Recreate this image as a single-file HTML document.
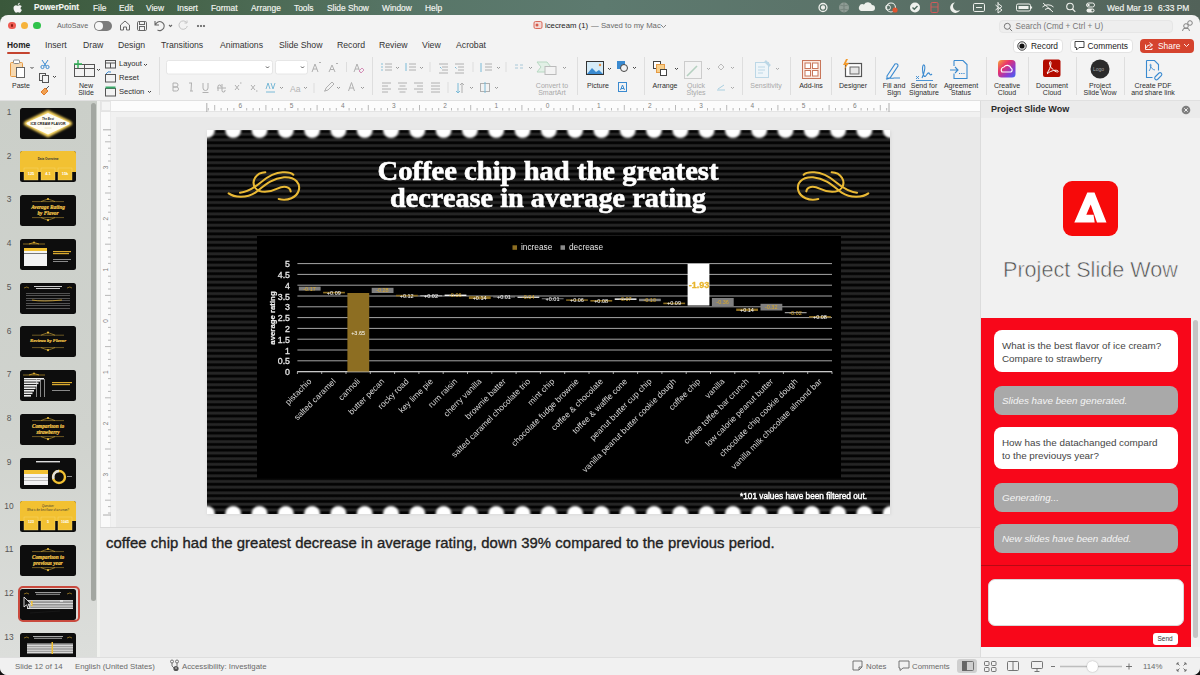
<!DOCTYPE html>
<html><head><meta charset="utf-8">
<style>
*{margin:0;padding:0;box-sizing:border-box}
html,body{width:1200px;height:675px;overflow:hidden;background:#111;font-family:"Liberation Sans",sans-serif}
.a{position:absolute}
.t{position:absolute;white-space:nowrap;line-height:1}
#menubar{left:0;top:0;width:1200px;height:16px;background:linear-gradient(90deg,#3a583b 0%,#46644a 15%,#587668 35%,#5d7a6f 50%,#5b7369 70%,#526259 100%);color:#f4f6f2;font-size:8.4px}
#menubar .t{top:3.8px;-webkit-text-stroke:0.15px #f4f6f2}
#win{left:0;top:15px;width:1200px;height:660px;background:#f3f3f3;border-radius:8px 8px 8px 8px;overflow:hidden}
.tab{position:absolute;top:40.5px;font-size:8.7px;color:#333;white-space:nowrap;line-height:1}
.lbl{position:absolute;font-size:7px;color:#2e2e2e;text-align:center;line-height:7.6px;white-space:nowrap}
.dim{color:#a9a9a9}
.sep{position:absolute;width:1px;background:#dedede;top:57px;height:38px}
.tn{position:absolute;left:2px;width:14px;text-align:center;font-size:8.4px;color:#555;line-height:1}
.st{position:absolute;top:662.5px;font-size:7.8px;color:#6a6a6a;white-space:nowrap;line-height:1}
.bub{position:absolute;left:994px;width:184px;border-radius:8px;font-size:9.86px;line-height:13.1px;padding:0 0 0 8px;color:#454545;font-family:"Liberation Sans",sans-serif}
.bw{background:#fff}
.bg{background:#a9a9a9;color:#f4f4f4;font-style:italic}
</style></head><body>
<div id="menubar" class="a">
 <svg class="a" style="left:12.5px;top:2px" width="10" height="12" viewBox="0 0 10 12"><path d="M7.6,6.4c0-1.4,1.1-2,1.2-2.1C8.1,3.3,7.1,3.2,6.7,3.2c-0.9-0.1-1.6,0.5-2,0.5s-1.1-0.5-1.8-0.5C1.9,3.2,0.5,4.100,0.5,6c0,1.200,0.400,2.400,1,3.300,0.500,0.700,1,1.500,1.700,1.400,0.700,0,0.900-0.400,1.700-0.400s1,0.400,1.700,0.400c0.700,0,1.200-0.700,1.600-1.400,0.500-0.700,0.700-1.500,0.700-1.500S7.600,7.500,7.600,6.400z M6.300,2.300C6.700,1.900,6.900,1.300,6.800,0.700,6.300,0.700,5.700,1,5.300,1.400,5,1.800,4.700,2.400,4.800,3,5.400,3,5.900,2.700,6.300,2.300z" fill="#f4f4f4"/></svg>
 <span class="t" style="left:34px;font-weight:bold;font-size:8.2px">PowerPoint</span>
 <span class="t" style="left:93px">File</span><span class="t" style="left:119px">Edit</span><span class="t" style="left:146px">View</span><span class="t" style="left:177px">Insert</span><span class="t" style="left:211px">Format</span><span class="t" style="left:251px">Arrange</span><span class="t" style="left:294px">Tools</span><span class="t" style="left:327px">Slide Show</span><span class="t" style="left:382px">Window</span><span class="t" style="left:425px">Help</span>
 <svg class="a" style="left:800px;top:0" width="300" height="16" viewBox="800 0 300 16" fill="none" stroke="#eef0ec" stroke-width="1.3">
  <circle cx="823" cy="7.5" r="4"/><circle cx="823" cy="7.5" r="1.5" fill="#eef0ec"/>
  <circle cx="844" cy="7.5" r="5" fill="#8f9c95" stroke="none"/><path d="M840,5 q4,2 8,0 M840,10 q4,-2 8,0 M844,2.5 v10" stroke="#6f7c75" stroke-width="0.7"/>
  <path d="M861,11 h11 a3,3 0 0,0 0,-6 a4.5,4.5 0 0,0 -8,-0.5 a3.3,3.3 0 0,0 -3,6.5z" fill="#eef0ec" stroke="none"/>
  <circle cx="891" cy="7.5" r="4.5" stroke-width="1.1"/><circle cx="888" cy="7.5" r="2.5" stroke-width="0.9"/><circle cx="895" cy="10" r="2.6" fill="#e0542f" stroke="none"/>
  <circle cx="915" cy="7.5" r="5" fill="#eef0ec" stroke="none"/><path d="M912.5,7.5 l1.8,1.8 3.2,-3.4" stroke="#4f6a5e" stroke-width="1.4"/>
  <rect x="931" y="2.5" width="7" height="10" rx="1.2" stroke="#d85a5a" stroke-width="1"/><path d="M931,7 h7" stroke="#d85a5a" stroke-width="0.8"/>
  <path d="M955,2.5 a5.2,5.2 0 1,0 5,7.5 a4.2,4.2 0 0,1 -5,-7.5z" fill="#eef0ec" stroke="none"/>
  <rect x="973.5" y="3.5" width="11" height="8" rx="1.2" stroke-width="1"/><path d="M976,7.5 h6" stroke-width="1"/>
  <path d="M998,3.5 l4,3 -4,3 M998,2 v11 l4,-3 -4,-3 M995.5,5 l2.5,2 M995.5,10 l2.5,-2" stroke-width="1"/>
  <rect x="1016.5" y="4" width="14" height="7" rx="1.5" stroke-width="1"/><rect x="1018.5" y="6" width="10" height="3" fill="#eef0ec" stroke="none"/><path d="M1031.5,6.5 v2" stroke-width="1.2"/>
  <path d="M1043,3 l10,9 M1042.5,7 a8,8 0 0,1 11,0 M1045,9.5 a4.5,4.5 0 0,1 6,0" stroke-width="1"/>
  <circle cx="1070" cy="6.5" r="3.3" stroke-width="1.1"/><path d="M1072.5,9 l2.8,2.8" stroke-width="1.2"/>
  <rect x="1086.5" y="3" width="8" height="4" rx="2" stroke-width="1"/><rect x="1086.5" y="8.5" width="8" height="4" rx="2" fill="#eef0ec" stroke="none"/><circle cx="1088.5" cy="5" r="1.2" fill="#eef0ec" stroke="none"/><circle cx="1092.5" cy="10.5" r="1.1" fill="#526259" stroke="none"/>
 </svg>
 <span class="t" style="left:1107px">Wed Mar 19</span><span class="t" style="left:1158px">6:33 PM</span>
</div>
<div class="a" style="left:0;top:14px;width:1200px;height:12px;background:linear-gradient(90deg,#3a583b 0%,#46644a 15%,#587668 35%,#5d7a6f 50%,#5b7369 70%,#526259 100%)"></div><div id="win" class="a"></div>
<!-- title bar -->
<div class="a" style="left:8px;top:21.5px;width:7.5px;height:7.5px;border-radius:50%;background:#ee5b52"></div>
<div class="a" style="left:10.5px;top:24px;width:2.5px;height:2.5px;border-radius:50%;background:#8c1a12"></div>
<div class="a" style="left:20.5px;top:21.5px;width:7.5px;height:7.5px;border-radius:50%;background:#f6b33b"></div>
<div class="a" style="left:33px;top:21.5px;width:7.5px;height:7.5px;border-radius:50%;background:#2fc24a"></div>
<span class="t" style="left:57px;top:22px;font-size:7.2px;color:#666">AutoSave</span>
<div class="a" style="left:94px;top:21px;width:18px;height:10px;border-radius:5px;background:#7b7b7b"><div class="a" style="left:1px;top:1px;width:8px;height:8px;border-radius:50%;background:#f7f7f7"></div></div>
<svg class="a" style="left:116px;top:17px" width="100" height="16" viewBox="0 0 100 16" fill="none" stroke="#666" stroke-width="1">
 <path d="M4.5,8 L9,4 L13.5,8 V13 H10.5 V10 H7.5 V13 H4.5Z"/>
 <rect x="21.5" y="4.5" width="9" height="9" rx="1.2"/><rect x="23.5" y="4.5" width="5" height="3"/><rect x="23.5" y="9.5" width="5" height="4"/>
 <path d="M39,4 v4 h4 M39.5,7.5 a4.5,4.5 0 1,1 2,5.5" stroke-width="1.1"/>
 <path d="M53,8 l1.5,1.5 1.5,-1.5" stroke-width="1.1"/>
 <path d="M70.5,5.5 a4.2,4.2 0 1,0 0.8,3.5 M71,3.5 v2.5 h-2.5" stroke="#c4c4c4"/>
 <circle cx="82" cy="9" r="0.7" fill="#666"/><circle cx="85" cy="9" r="0.7" fill="#666"/><circle cx="88" cy="9" r="0.7" fill="#666"/>
</svg>
<svg class="a" style="left:533px;top:20px" width="10" height="10" viewBox="0 0 10 10"><rect x="1" y="1.5" width="8" height="7" rx="1.5" fill="#f2d9d5" stroke="#d65a4a" stroke-width="0.9"/><circle cx="4" cy="5" r="1.5" fill="#d65a4a"/></svg>
<span class="t" style="left:545px;top:21.5px;font-size:7.75px;color:#222">icecream (1)</span>
<span class="t" style="left:591px;top:21.5px;font-size:7.75px;color:#6a6a6a">— Saved to my Mac</span><svg class="a" style="left:660px;top:24px" width="7" height="5" viewBox="0 0 7 5" fill="none" stroke="#777" stroke-width="0.9"><path d="M1,1 l2.5,2.5 2.5,-2.5"/></svg>
<div class="a" style="left:999px;top:19.5px;width:174px;height:13px;border-radius:4px;background:#eeeeee;border:1px solid #e6e6e6"></div>
<svg class="a" style="left:1003px;top:21.5px" width="10" height="10" viewBox="0 0 10 10" fill="none" stroke="#777" stroke-width="1"><circle cx="4.3" cy="4.3" r="3"/><path d="M6.5,6.5 l2.6,2.6"/></svg>
<span class="t" style="left:1015.5px;top:22.8px;font-size:8.15px;color:#777">Search (Cmd + Ctrl + U)</span>
<svg class="a" style="left:1181px;top:18px" width="14" height="14" viewBox="0 0 14 14" fill="none" stroke="#777" stroke-width="0.9"><circle cx="5" cy="8" r="2.3"/><circle cx="9" cy="5" r="2.3"/><path d="M1.5,13 a3.5,3 0 0,1 7,0"/></svg>
<!-- tabs -->
<span class="tab" style="left:7px;color:#222;font-weight:bold;font-size:8.4px">Home</span>
<div class="a" style="left:7px;top:51.5px;width:23px;height:2px;background:#c4432f;border-radius:1px"></div>
<span class="tab" style="left:45px">Insert</span><span class="tab" style="left:83px">Draw</span><span class="tab" style="left:118px">Design</span><span class="tab" style="left:161px">Transitions</span><span class="tab" style="left:220px">Animations</span><span class="tab" style="left:279px">Slide Show</span><span class="tab" style="left:337px">Record</span><span class="tab" style="left:379px">Review</span><span class="tab" style="left:422px">View</span><span class="tab" style="left:456px">Acrobat</span>
<div class="a" style="left:1012.5px;top:38.5px;width:50px;height:14px;border-radius:4px;background:#fff;border:1px solid #e3e3e3"></div>
<svg class="a" style="left:1017px;top:40.5px" width="10" height="10" viewBox="0 0 10 10"><circle cx="5" cy="5" r="4.2" fill="none" stroke="#222" stroke-width="0.9"/><circle cx="5" cy="5" r="2.6" fill="#111"/></svg>
<span class="t" style="left:1031px;top:41.5px;font-size:8.4px;color:#222">Record</span>
<div class="a" style="left:1069.5px;top:38.5px;width:63px;height:14px;border-radius:4px;background:#fff;border:1px solid #e3e3e3"></div>
<svg class="a" style="left:1074px;top:40px" width="11" height="11" viewBox="0 0 11 11" fill="none" stroke="#333" stroke-width="0.9"><path d="M1,1.5 h9 v6 h-5 l-2.5,2.5 v-2.5 h-1.5z"/></svg>
<span class="t" style="left:1087.5px;top:41.5px;font-size:8.4px;color:#222">Comments</span>
<div class="a" style="left:1139.5px;top:38.5px;width:54px;height:14px;border-radius:4px;background:#d5432e"></div>
<svg class="a" style="left:1144px;top:40.5px" width="10" height="10" viewBox="0 0 10 10" fill="none" stroke="#fff" stroke-width="0.9"><path d="M5.5,1.5 l3,2.5 -3,2.5 M8.5,4 h-3 a3,3 0 0,0 -3,3 M1.5,3.5 v5 h6.5 v-1.5"/></svg>
<span class="t" style="left:1158px;top:41.5px;font-size:8.4px;color:#fff">Share</span>
<svg class="a" style="left:1183px;top:43px" width="7" height="5" viewBox="0 0 7 5" fill="none" stroke="#fff" stroke-width="0.9"><path d="M1,1 l2.5,2.5 2.5,-2.5"/></svg>
<!-- ribbon -->
<svg class="a" style="left:0;top:55px" width="1200" height="45" viewBox="0 55 1200 45" fill="none" stroke-width="1">
 <!-- Paste -->
 <rect x="10.5" y="62.5" width="12" height="14" rx="1" fill="#f7d9b0" stroke="#e59a45"/>
 <rect x="13.5" y="60" width="6" height="3.5" rx="1" fill="#fff" stroke="#888"/>
 <rect x="16.5" y="67.5" width="8" height="10" fill="#fff" stroke="#666"/>
 <path d="M30.5,67 l1.5,1.5 1.5,-1.5" stroke="#444"/>
 <!-- cut copy painter -->
 <path d="M42,60 l4,6 M48,60 l-4,6" stroke="#3a8ad0"/><circle cx="42.5" cy="67" r="1.6" stroke="#3a8ad0"/><circle cx="47.5" cy="67" r="1.6" stroke="#3a8ad0"/>
 <rect x="39.5" y="73.5" width="6" height="7" stroke="#555"/><rect x="42.5" y="75.5" width="6" height="7" fill="#f3f3f3" stroke="#555"/>
 <path d="M53,76 l1.5,1.5 1.5,-1.5" stroke="#444"/>
 <path d="M41,92 l4,-4 3,3 -4,4z" fill="#f0a050" stroke="#e07a2a"/><path d="M46,89 l3,-3" stroke="#555"/>
 <!-- new slide -->
 <rect x="74.5" y="64.5" width="20" height="12" stroke="#555"/><path d="M84.5,64.5 v12 M74.5,68.5 h20" stroke="#555"/>
 <path d="M78,60 v8 M74,64 h8" stroke="#2fae55" stroke-width="1.4"/>
 <path d="M97,69 l1.5,1.5 1.5,-1.5" stroke="#444"/>
 <!-- layout reset section -->
 <rect x="105.5" y="60.5" width="10" height="7.5" stroke="#555"/><path d="M105.5,63 h10 M110.5,63 v5" stroke="#555"/>
 <path d="M144,64 l1.5,1.5 1.5,-1.5" stroke="#444"/>
 <rect x="105.5" y="74.5" width="10" height="7.5" stroke="#555"/><path d="M106,74 a4,4 0 0,1 5,-2" stroke="#3a8ad0"/>
 <rect x="105.5" y="88.5" width="10" height="7.5" stroke="#555"/><rect x="105.5" y="86.5" width="10" height="2" fill="#3aaa6a" stroke="none"/>
 <path d="M148,91 l1.5,1.5 1.5,-1.5" stroke="#444"/>
 <!-- font boxes -->
 <rect x="166.5" y="60.5" width="106" height="13.5" rx="2" fill="#fff" stroke="#e6e6e6"/>
 <path d="M266,66.5 l1.5,1.5 1.5,-1.5" stroke="#555"/>
 <rect x="275.5" y="60.5" width="32" height="13.5" rx="2" fill="#fff" stroke="#e6e6e6"/>
 <path d="M301,66.5 l1.5,1.5 1.5,-1.5" stroke="#555"/>
 <g stroke="#b0b0b0">
 <path d="M312,72 l3,-8 3,8 M313,69 h4 M319,63 l1,-1 1,1"/>
 <path d="M329,72 l3,-7 3,7 M330,69.5 h4 M336,63 l1,1 1,-1"/>
 <path d="M346.5,62 v10" stroke="#ddd"/>
 <path d="M354,72 l3,-8 3,8 M355,69 h4"/><path d="M359,71 l3,-3 2,2 -3,3z" stroke="#d58fb8"/>
 <!-- row 2 -->
 <path d="M173,83 h3 a2,2 0 0,1 0,4 h-3z M173,87 h3.5 a2,2 0 0,1 0,4 h-3.5z"/>
 <path d="M189,83 h3 M190,91 h3 M191.5,83 l-0.5,8"/>
 <path d="M203,83 v5 a2.5,2.5 0 0,0 5,0 v-5 M202.5,92.5 h6"/>
 <path d="M217,88 h9 M218,91 v-5 a1.5,1.5 0 0,1 3,1 M222,84 v7 a1.5,1.5 0 0,0 3,-1"/>
 <path d="M235,85 l4,5 M239,85 l-4,5 M240,83 h1.5"/>
 <path d="M251,85 l4,5 M255,85 l-4,5 M256,91 h1.5"/>
 <path d="M266,89 l2,-6 2,6 M271,83 l2,6 2,-6 M266,92 h9" stroke="#7bbad7"/>
 <path d="M280,87 l1.5,1.5 1.5,-1.5" stroke="#999"/>
 
 <path d="M304,87 l1.5,1.5 1.5,-1.5" stroke="#999"/>
 <path d="M314,83 v10" stroke="#ddd"/>
 <path d="M325,91 l1,-3 6,-6 2,2 -6,6z M325,91 h-1"/>
 <path d="M337,87 l1.5,1.5 1.5,-1.5" stroke="#999"/>
 <path d="M348.5,91 l3,-8.5 3,8.5 M349.8,88 h3.4"/>
 <path d="M361,87 l1.5,1.5 1.5,-1.5" stroke="#999"/>
 <!-- paragraph -->
 <circle cx="382" cy="64" r="0.8" fill="#7bbad7" stroke="none"/><circle cx="382" cy="67" r="0.8" fill="#7bbad7" stroke="none"/><circle cx="382" cy="70" r="0.8" fill="#7bbad7" stroke="none"/>
 <path d="M385,64 h7 M385,67 h7 M385,70 h7"/><path d="M396,67 l1.5,1.5 1.5,-1.5" stroke="#999"/>
 <path d="M406,63 v8" stroke="#7bbad7"/><path d="M409,64 h7 M409,67 h7 M409,70 h7"/><path d="M420,67 l1.5,1.5 1.5,-1.5" stroke="#999"/>
 <path d="M430,62 v10" stroke="#ddd"/>
 <path d="M439,64 h9 M442,67 h6 M442,70 h6 M439,73 h9"/><path d="M440,67 l1.5,1.5" stroke="#7bbad7"/>
 <path d="M455,64 h9 M458,67 h6 M458,70 h6 M455,73 h9"/><path d="M455,67 l1.5,1.5" stroke="#7bbad7"/>
 <path d="M473,62 v10" stroke="#ddd"/>
 <path d="M481,63 v9" stroke="#7bbad7"/><path d="M485,64 h7 M485,67 h7 M485,70 h7"/><path d="M497,67 l1.5,1.5 1.5,-1.5" stroke="#999"/>
 <path d="M506,62 v10" stroke="#ddd"/>
 <path d="M515,65 h3 M515,68 h3 M520,65 h3 M520,68 h3" stroke="#a9c8d8"/><path d="M529,67 l1.5,1.5 1.5,-1.5" stroke="#999"/>
 <path d="M537,62 h10 l4,5 -4,5 h-10 l4,-5z" fill="#e2f0e6" stroke="#b7d8c2"/><rect x="545" y="66.5" width="11" height="8" fill="#f3f3f3" stroke="#bbb"/>
 <path d="M563,67 l1.5,1.5 1.5,-1.5" stroke="#999"/>
 <path d="M382,83 h9 M382,86 h6 M382,89 h9 M382,92 h6"/>
 <path d="M398,83 h9 M399.5,86 h6 M398,89 h9 M399.5,92 h6"/>
 <path d="M414,83 h9 M417,86 h6 M414,89 h9 M417,92 h6"/>
 <path d="M431,83 h9 M431,86 h9 M431,89 h9 M431,92 h9"/>
 <path d="M448,82 v11" stroke="#ddd"/>
 <path d="M458,83 v10 M456,91 l2,2 2,-2" stroke="#7bbad7"/><path d="M462,93 v-10 M460,85 l2,-2 2,2"/>
 <path d="M470,87 l1.5,1.5 1.5,-1.5" stroke="#999"/>
 <rect x="480.5" y="83.5" width="9" height="8"/><path d="M485,82 v11" stroke="#7bbad7"/>
 <path d="M495,87 l1.5,1.5 1.5,-1.5" stroke="#999"/>
 </g>
 <!-- picture / shapes -->
 <rect x="586.5" y="61.5" width="17" height="13" fill="#d5ebf7" stroke="#333"/><path d="M587,74 l5,-6 4,4 3,-2 4,4z" fill="#3a8ad0" stroke="none"/><circle cx="600" cy="65" r="1.2" fill="#e88a3a" stroke="none"/>
 <path d="M608,68 l1.5,1.5 1.5,-1.5" stroke="#444"/>
 <rect x="617.5" y="61.5" width="7" height="7" fill="#3a8ad0" stroke="#3a8ad0"/><circle cx="624" cy="68" r="3.5" fill="#f3f3f3" stroke="#444"/>
 <path d="M633,67 l1.5,1.5 1.5,-1.5" stroke="#444"/>
 <rect x="618.5" y="82.5" width="8" height="9" stroke="#3a8ad0"/><path d="M620.5,90 l2,-5 2,5 M621,88.5 h3" stroke="#3a8ad0"/>
 <!-- arrange -->
 <rect x="653.5" y="61.5" width="7" height="7" fill="#fff" stroke="#444"/><rect x="656.5" y="64.5" width="8" height="8" fill="#f7cf8a" stroke="#e59a45"/><rect x="660.5" y="69.5" width="6" height="6" fill="#fff" stroke="#444"/>
 <path d="M675,68 l1.5,1.5 1.5,-1.5" stroke="#444"/>
 <rect x="684.5" y="61.5" width="17" height="17" stroke="#ccc"/><path d="M687,76 l10,-10" stroke="#b5d0c0" stroke-width="1.6"/>
 <path d="M707,68 l1.5,1.5 1.5,-1.5" stroke="#aaa"/>
 <path d="M718,67 l3,-3 3,3 -3,3z" stroke="#bbb"/><path d="M731,67 l1.5,1.5 1.5,-1.5" stroke="#aaa"/>
 <path d="M718,89 l6,-4 M717,90 h8" stroke="#a9cfe0"/><path d="M731,87 l1.5,1.5 1.5,-1.5" stroke="#aaa"/>
 <!-- sensitivity -->
 <rect x="755.5" y="62.5" width="13" height="15" fill="#eef5f9" stroke="#bcd7e6"/><path d="M758,67 h7 M758,70 h7 M758,73 h5" stroke="#bcd7e6"/><path d="M765,61 l5,5" stroke="#bcd7e6" stroke-width="2.5"/>
 <path d="M776,68 l1.5,1.5 1.5,-1.5" stroke="#aaa"/>
 <!-- add-ins -->
 <rect x="802.5" y="60.5" width="18" height="18" fill="#fbe9e1" stroke="#c8765a"/><rect x="805" y="63" width="5.5" height="5.5" fill="#fff" stroke="#c8765a"/><rect x="812.5" y="63" width="5.5" height="5.5" fill="#fff" stroke="#c8765a"/><rect x="805" y="70.5" width="5.5" height="5.5" fill="#fff" stroke="#c8765a"/><rect x="812.5" y="70.5" width="5.5" height="5.5" fill="#fff" stroke="#c8765a"/>
 <!-- designer -->
 <rect x="845.5" y="63.5" width="16" height="13" fill="#fff" stroke="#555" stroke-width="1.2"/><rect x="850" y="67" width="9" height="7" fill="#e6e6e6" stroke="#666"/>
 <path d="M846,59 l-3,6 h3 l-2,5 5,-7 h-3 l2,-4z" fill="#f39a2c" stroke="none"/>
 <!-- fill and sign etc -->
 <path d="M887,76 l8,-12 a2,2 0 0,1 3,2 l-8,12 -3,1z M886,79 c3,-2 5,0 8,-1 h6" stroke="#3a8ad0" stroke-width="1.1"/>
 <path d="M916,76 l3,3 M919,76 l-3,3 M916,80.5 h17" stroke="#3a8ad0" stroke-width="0.9"/><path d="M922,78 c2,-4 4,-12 2,-13 c-2,-1 -2,8 0,11 c2,2 3,-4 5,-3 c1,1 1,3 3,1" stroke="#3a8ad0" stroke-width="1.1"/>
 <path d="M954,60.5 h9 l4,4 v14 h-13 v-5 M954,66 v-5.5" stroke="#3a8ad0" stroke-width="1.1"/><path d="M950,70 h8 M955,67 l3,3 -3,3" stroke="#3a8ad0" stroke-width="1.1"/><path d="M959,73.5 h6" stroke="#3a8ad0" stroke-dasharray="1.2 1"/>
 <!-- creative cloud -->
 <defs><linearGradient id="ccg" x1="0" y1="0" x2="1" y2="1"><stop offset="0" stop-color="#f7a93a"/><stop offset="0.35" stop-color="#e9336b"/><stop offset="0.7" stop-color="#8a3bd1"/><stop offset="1" stop-color="#3d6af2"/></linearGradient></defs>
 <rect x="998" y="60" width="17.5" height="17.5" rx="3.5" fill="url(#ccg)"/><path d="M1002,72 a3,3 0 0,1 2,-5 a4,4 0 0,1 7,1 a2.3,2.3 0 0,1 0,4z" stroke="#fff" stroke-width="1.2"/>
 <!-- document cloud -->
 <rect x="1043" y="59.5" width="17.5" height="17.5" rx="2" fill="#b30b00"/><path d="M1047,73 c2,-2 4,-7 4,-10 c0,-2 -1.5,-2 -1.5,0 c0,4 5,9 8,9 c1,0 1,-1 0,-1.5 c-3,-1 -8,1 -10.5,3.5" stroke="#fff" stroke-width="1"/>
 <!-- logo -->
 <circle cx="1100" cy="69" r="9.5" fill="#2b2b2b"/>
 <!-- create pdf -->
 <path d="M1146.5,60.5 h8 l4,4 v6 M1146.5,60.5 v17 h6" stroke="#3a8ad0" stroke-width="1.1"/><path d="M1149,71 c1,-1 2,-4 2,-6 c0,-1 -1,-1 -1,0 c0,2 3,5 5,5" stroke="#3a8ad0" stroke-width="0.9"/><path d="M1155,77 l4,-4 a1.8,1.8 0 0,1 2.5,2.5 l-4,4 a1.8,1.8 0 0,1 -2.5,-2.5z" stroke="#3a8ad0" stroke-width="1.1"/>
</svg>
<span class="t" style="left:1093px;top:66.5px;font-size:5px;color:#aaa">Logo</span>
<span class="t" style="left:290px;top:84.5px;font-size:8.6px;color:#b4b4b4">Aa</span>
<div class="sep" style="left:65px"></div><div class="sep" style="left:159px"></div><div class="sep" style="left:372px"></div><div class="sep" style="left:577px"></div><div class="sep" style="left:644px"></div><div class="sep" style="left:742px"></div><div class="sep" style="left:790px"></div><div class="sep" style="left:831px"></div><div class="sep" style="left:875px"></div><div class="sep" style="left:986px"></div><div class="sep" style="left:1028px"></div><div class="sep" style="left:1076px"></div><div class="sep" style="left:1124px"></div>
<div class="lbl" style="left:0px;width:42px;top:81.8px">Paste</div>
<div class="lbl" style="left:70px;width:32px;top:81.8px">New<br>Slide</div>
<span class="t" style="left:119px;top:60px;font-size:7.6px;color:#2e2e2e">Layout</span>
<span class="t" style="left:119px;top:73.5px;font-size:7.6px;color:#2e2e2e">Reset</span>
<span class="t" style="left:119px;top:87.8px;font-size:7.6px;color:#2e2e2e">Section</span>
<div class="lbl dim" style="left:527px;width:50px;top:81.8px">Convert to<br>SmartArt</div>
<div class="lbl" style="left:580px;width:36px;top:81.8px">Picture</div>
<div class="lbl" style="left:647px;width:36px;top:81.8px">Arrange</div>
<div class="lbl dim" style="left:678px;width:36px;top:81.8px">Quick<br>Styles</div>
<div class="lbl dim" style="left:745px;width:42px;top:81.8px">Sensitivity</div>
<div class="lbl" style="left:793px;width:36px;top:81.8px">Add-ins</div>
<div class="lbl" style="left:835px;width:36px;top:81.8px">Designer</div>
<div class="lbl" style="left:876px;width:36px;top:81.8px">Fill and<br>Sign</div>
<div class="lbl" style="left:904px;width:40px;top:81.8px">Send for<br>Signature</div>
<div class="lbl" style="left:940px;width:42px;top:81.8px">Agreement<br>Status</div>
<div class="lbl" style="left:987px;width:40px;top:81.8px">Creative<br>Cloud</div>
<div class="lbl" style="left:1030px;width:44px;top:81.8px">Document<br>Cloud</div>
<div class="lbl" style="left:1078px;width:44px;top:81.8px">Project<br>Slide Wow</div>
<div class="lbl" style="left:1124px;width:58px;top:81.8px">Create PDF<br>and share link</div>
<!-- ribbon bottom border -->
<div class="a" style="left:0;top:100px;width:1200px;height:1px;background:#e0e0e0"></div>
<!-- thumbnails panel -->
<div class="a" style="left:0;top:101px;width:98px;height:556px;background:linear-gradient(180deg,#cbcfc9 0%,#d0d3ce 60%,#dcdedb 100%)"></div>
<div class="a" style="left:91px;top:103px;width:5px;height:498px;border-radius:3px;background:#a3a7a1"></div>
<div class="a" style="left:97px;top:101px;width:3px;height:556px;background:#f1f2ef"></div><div class="a" style="left:100px;top:101px;width:1px;height:556px;background:#e3e3e3"></div>
<div class="tn" style="top:107.7px">1</div>
<svg class="a" style="left:20px;top:107.5px" width="56" height="31" viewBox="0 0 56 31" font-family="Liberation Sans, sans-serif"><defs><filter id="tg1" x="-30%" y="-30%" width="160%" height="160%"><feGaussianBlur stdDeviation="0.9"/></filter></defs><rect width="56" height="31" rx="2.5" fill="#0d0d0d"/><path d="M28,3.2 L50,14 Q52.5,15.5 50,17 L28,28.3 L6,17 Q3.5,15.5 6,14Z" fill="#f9de7a" stroke="#f5d055" stroke-width="2" filter="url(#tg1)"/><path d="M28,5 L48.5,14.3 Q50.5,15.5 48.5,16.7 L28,26.5 L7.5,16.7 Q5.5,15.5 7.5,14.3Z" fill="#fffdf4"/><text x="28" y="12.3" font-size="2.8" text-anchor="middle" font-style="italic" font-weight="bold" fill="#222">The Best</text><text x="28" y="16.7" font-size="3.55" font-weight="bold" text-anchor="middle" fill="#111">ICE CREAM FLAVOR</text><rect x="24.5" y="19.5" width="7" height="1.2" fill="#efe8c8"/></svg>
<div class="tn" style="top:151.5px">2</div>
<svg class="a" style="left:20px;top:151.3px" width="56" height="31" viewBox="0 0 56 31" font-family="Liberation Sans, sans-serif"><rect width="56" height="31" rx="2.5" fill="#0d0d0d"/><rect width="56" height="21" rx="2.5" fill="#f2c132"/><rect y="10" width="56" height="11" fill="#f2c132"/><text x="28" y="9" font-size="3" text-anchor="middle" fill="#333" font-weight="bold">Data Overview</text><rect x="4" y="17" width="14" height="12" fill="#f2c132" stroke="#f7dc7a" stroke-width="0.4"/><rect x="21" y="17" width="14" height="12" fill="#f2c132" stroke="#f7dc7a" stroke-width="0.4"/><rect x="38" y="17" width="14" height="12" fill="#f2c132" stroke="#f7dc7a" stroke-width="0.4"/><text x="11" y="24" font-size="4" text-anchor="middle" fill="#fff" font-weight="bold">125</text><text x="28" y="24" font-size="4" text-anchor="middle" fill="#fff" font-weight="bold">4.1</text><text x="45" y="24" font-size="4" text-anchor="middle" fill="#fff" font-weight="bold">15k</text></svg>
<div class="tn" style="top:195.2px">3</div>
<svg class="a" style="left:20px;top:195.0px" width="56" height="31" viewBox="0 0 56 31" font-family="Liberation Sans, sans-serif"><rect width="56" height="31" rx="2.5" fill="#0d0d0d"/><line x1="12.0" y1="6.6" x2="44.0" y2="6.6" stroke="#caa23a" stroke-width="0.5"/><path d="M21,6.6 q3.5,-1.5 7,-2.5 q3.5,1 7,2.5" stroke="#d9ac35" stroke-width="0.6" fill="none"/><circle cx="28" cy="3.9999999999999996" r="1.1" fill="#e0b43a"/><line x1="12.0" y1="22.6" x2="44.0" y2="22.6" stroke="#caa23a" stroke-width="0.5"/><path d="M21,22.6 q3.5,1.5 7,2.5 q3.5,-1 7,-2.5" stroke="#d9ac35" stroke-width="0.6" fill="none"/><circle cx="28" cy="25.200000000000003" r="1.1" fill="#e0b43a"/><text x="28" y="14.4" font-size="5.3" text-anchor="middle" font-family="Liberation Serif" font-style="italic" font-weight="bold" fill="#f3c64a" stroke="#f3c64a" stroke-width="0.2">Average Rating</text><text x="28" y="19.6" font-size="5.3" text-anchor="middle" font-family="Liberation Serif" font-style="italic" font-weight="bold" fill="#f3c64a" stroke="#f3c64a" stroke-width="0.2">by Flavor</text></svg>
<div class="tn" style="top:239.0px">4</div>
<svg class="a" style="left:20px;top:238.8px" width="56" height="31" viewBox="0 0 56 31" font-family="Liberation Sans, sans-serif"><rect width="56" height="31" rx="2.5" fill="#0d0d0d"/><line x1="3.0" y1="5" x2="25.0" y2="5" stroke="#d9a92e" stroke-width="0.6"/><path d="M9,5 q5,-3 10,0" stroke="#d9a92e" stroke-width="0.8" fill="none"/><circle cx="14" cy="3.5" r="1" fill="#d9a92e"/><rect x="4" y="9" width="23" height="18" fill="#f3f3f3"/><rect x="4" y="9" width="23" height="3" fill="#f2c132"/><rect x="4" y="14" width="23" height="1" fill="#777"/><rect x="33" y="12" width="18" height="1.2" fill="#d9a92e"/><rect x="33" y="14" width="16" height="1.2" fill="#d9a92e"/><rect x="33" y="20" width="18" height="0.8" fill="#aaa"/><rect x="33" y="22" width="15" height="0.8" fill="#aaa"/></svg>
<div class="tn" style="top:282.7px">5</div>
<svg class="a" style="left:20px;top:282.5px" width="56" height="31" viewBox="0 0 56 31" font-family="Liberation Sans, sans-serif"><rect width="56" height="31" rx="2.5" fill="#0d0d0d"/><rect x="14" y="3" width="28" height="1" fill="#ccc"/><rect x="16" y="5" width="24" height="1" fill="#ccc"/><path d="M4,5 q3,-2 5,0" stroke="#d9a92e" stroke-width="0.6" fill="none"/><path d="M47,5 q3,-2 5,0" stroke="#d9a92e" stroke-width="0.6" fill="none"/><rect x="6" y="10" width="44" height="0.5" fill="#999"/><rect x="6" y="12.5" width="44" height="0.5" fill="#999"/><rect x="6" y="15" width="44" height="0.5" fill="#999"/><rect x="6" y="17.5" width="44" height="0.5" fill="#999"/><rect x="6" y="20" width="44" height="0.5" fill="#999"/><rect x="6" y="22.5" width="44" height="0.5" fill="#999"/><rect x="6" y="25" width="44" height="0.5" fill="#999"/><path d="M12,17 q10,2 30,0" stroke="#d9a92e" stroke-width="0.8" fill="none"/></svg>
<div class="tn" style="top:326.5px">6</div>
<svg class="a" style="left:20px;top:326.3px" width="56" height="31" viewBox="0 0 56 31" font-family="Liberation Sans, sans-serif"><rect width="56" height="31" rx="2.5" fill="#0d0d0d"/><line x1="12.0" y1="9.2" x2="44.0" y2="9.2" stroke="#caa23a" stroke-width="0.5"/><path d="M21,9.2 q3.5,-1.5 7,-2.5 q3.5,1 7,2.5" stroke="#d9ac35" stroke-width="0.6" fill="none"/><circle cx="28" cy="6.6" r="1.1" fill="#e0b43a"/><line x1="12.0" y1="21.6" x2="44.0" y2="21.6" stroke="#caa23a" stroke-width="0.5"/><path d="M21,21.6 q3.5,1.5 7,2.5 q3.5,-1 7,-2.5" stroke="#d9ac35" stroke-width="0.6" fill="none"/><circle cx="28" cy="24.200000000000003" r="1.1" fill="#e0b43a"/><text x="28" y="16.4" font-size="4.9" text-anchor="middle" font-family="Liberation Serif" font-style="italic" font-weight="bold" fill="#f3c64a" stroke="#f3c64a" stroke-width="0.2" textLength="36" lengthAdjust="spacingAndGlyphs">Reviews by Flavor</text></svg>
<div class="tn" style="top:370.3px">7</div>
<svg class="a" style="left:20px;top:370.1px" width="56" height="31" viewBox="0 0 56 31" font-family="Liberation Sans, sans-serif"><rect width="56" height="31" rx="2.5" fill="#0d0d0d"/><line x1="3.0" y1="5" x2="25.0" y2="5" stroke="#d9a92e" stroke-width="0.6"/><path d="M9,5 q5,-3 10,0" stroke="#d9a92e" stroke-width="0.8" fill="none"/><circle cx="14" cy="3.5" r="1" fill="#d9a92e"/><rect x="4" y="8" width="20" height="19" fill="#0d0d0d"/><rect x="4" y="8" width="20" height="1.5" fill="#f3f3f3"/><rect x="4" y="10.0" width="16.0" height="1.6" fill="#eee"/><rect x="4" y="12.5" width="14.5" height="1.6" fill="#eee"/><rect x="4" y="15.0" width="13.0" height="1.6" fill="#eee"/><rect x="4" y="17.5" width="11.5" height="1.6" fill="#eee"/><rect x="4" y="20.0" width="10.0" height="1.6" fill="#eee"/><rect x="4" y="22.5" width="8.5" height="1.6" fill="#eee"/><rect x="4" y="25.0" width="7.0" height="1.6" fill="#eee"/><rect x="16" y="9" width="0.6" height="18" fill="#ddd"/><rect x="20" y="9" width="0.6" height="18" fill="#ddd"/><rect x="24" y="9" width="0.6" height="18" fill="#ddd"/><rect x="32" y="12" width="20" height="1.2" fill="#d9a92e"/><rect x="32" y="14" width="18" height="1.2" fill="#d9a92e"/><rect x="32" y="20" width="18" height="0.8" fill="#aaa"/></svg>
<div class="tn" style="top:414.0px">8</div>
<svg class="a" style="left:20px;top:413.8px" width="56" height="31" viewBox="0 0 56 31" font-family="Liberation Sans, sans-serif"><rect width="56" height="31" rx="2.5" fill="#0d0d0d"/><line x1="12.0" y1="6.6" x2="44.0" y2="6.6" stroke="#caa23a" stroke-width="0.5"/><path d="M21,6.6 q3.5,-1.5 7,-2.5 q3.5,1 7,2.5" stroke="#d9ac35" stroke-width="0.6" fill="none"/><circle cx="28" cy="3.9999999999999996" r="1.1" fill="#e0b43a"/><line x1="12.0" y1="22.6" x2="44.0" y2="22.6" stroke="#caa23a" stroke-width="0.5"/><path d="M21,22.6 q3.5,1.5 7,2.5 q3.5,-1 7,-2.5" stroke="#d9ac35" stroke-width="0.6" fill="none"/><circle cx="28" cy="25.200000000000003" r="1.1" fill="#e0b43a"/><text x="28" y="14.4" font-size="5.3" text-anchor="middle" font-family="Liberation Serif" font-style="italic" font-weight="bold" fill="#f3c64a" stroke="#f3c64a" stroke-width="0.2">Comparison to</text><text x="28" y="19.6" font-size="5.3" text-anchor="middle" font-family="Liberation Serif" font-style="italic" font-weight="bold" fill="#f3c64a" stroke="#f3c64a" stroke-width="0.2">strawberry</text></svg>
<div class="tn" style="top:457.8px">9</div>
<svg class="a" style="left:20px;top:457.6px" width="56" height="31" viewBox="0 0 56 31" font-family="Liberation Sans, sans-serif"><rect width="56" height="31" rx="2.5" fill="#0d0d0d"/><rect x="16" y="3" width="24" height="1.4" fill="#ddd"/><rect x="4" y="12" width="24" height="15" fill="#f3f3f3"/><rect x="4" y="12" width="24" height="4" fill="#f2c132"/><rect x="4" y="19" width="24" height="0.6" fill="#999"/><rect x="4" y="22" width="24" height="0.6" fill="#999"/><circle cx="39" cy="19" r="6" fill="none" stroke="#f2c132" stroke-width="2.4"/><path d="M39,13 a6,6 0 0,0 -5.5,8" stroke="#ddd" stroke-width="2.4" fill="none"/><rect x="47" y="18" width="5" height="0.8" fill="#aaa"/></svg>
<div class="tn" style="top:501.5px">10</div>
<svg class="a" style="left:20px;top:501.3px" width="56" height="31" viewBox="0 0 56 31" font-family="Liberation Sans, sans-serif"><rect width="56" height="31" rx="2.5" fill="#0d0d0d"/><rect width="56" height="20" rx="2.5" fill="#f2c132"/><rect y="10" width="56" height="10" fill="#f2c132"/><text x="28" y="5.5" font-size="2.8" text-anchor="middle" font-style="italic" fill="#333">Question:</text><text x="28" y="9.5" font-size="2.6" text-anchor="middle" font-style="italic" fill="#333">What is the best flavor of ice cream?</text><rect x="4" y="16" width="14" height="13" fill="#f2c132" stroke="#f7dc7a" stroke-width="0.4"/><rect x="21" y="16" width="14" height="13" fill="#f2c132" stroke="#f7dc7a" stroke-width="0.4"/><rect x="38" y="16" width="14" height="13" fill="#f2c132" stroke="#f7dc7a" stroke-width="0.4"/><text x="11" y="22" font-size="3.6" text-anchor="middle" fill="#fff" font-weight="bold">123</text><text x="28" y="22" font-size="3.6" text-anchor="middle" fill="#fff" font-weight="bold">5</text><text x="45" y="22" font-size="3.6" text-anchor="middle" fill="#fff" font-weight="bold">1045</text></svg>
<div class="tn" style="top:545.3px">11</div>
<svg class="a" style="left:20px;top:545.1px" width="56" height="31" viewBox="0 0 56 31" font-family="Liberation Sans, sans-serif"><rect width="56" height="31" rx="2.5" fill="#0d0d0d"/><line x1="12.0" y1="6.6" x2="44.0" y2="6.6" stroke="#caa23a" stroke-width="0.5"/><path d="M21,6.6 q3.5,-1.5 7,-2.5 q3.5,1 7,2.5" stroke="#d9ac35" stroke-width="0.6" fill="none"/><circle cx="28" cy="3.9999999999999996" r="1.1" fill="#e0b43a"/><line x1="12.0" y1="22.6" x2="44.0" y2="22.6" stroke="#caa23a" stroke-width="0.5"/><path d="M21,22.6 q3.5,1.5 7,2.5 q3.5,-1 7,-2.5" stroke="#d9ac35" stroke-width="0.6" fill="none"/><circle cx="28" cy="25.200000000000003" r="1.1" fill="#e0b43a"/><text x="28" y="14.4" font-size="5.3" text-anchor="middle" font-family="Liberation Serif" font-style="italic" font-weight="bold" fill="#f3c64a" stroke="#f3c64a" stroke-width="0.2">Comparison to</text><text x="28" y="19.6" font-size="5.3" text-anchor="middle" font-family="Liberation Serif" font-style="italic" font-weight="bold" fill="#f3c64a" stroke="#f3c64a" stroke-width="0.2">previous year</text></svg>
<div class="tn" style="top:589.1px">12</div>
<div class="a" style="left:17.5px;top:586.4px;width:62px;height:36px;border:2px solid #c94a3e;border-radius:5px"></div>
<svg class="a" style="left:20px;top:588.9px" width="56" height="31" viewBox="0 0 56 31" font-family="Liberation Sans, sans-serif"><rect width="56" height="31" rx="2.5" fill="#0d0d0d"/><rect x="15" y="3" width="26" height="0.9" fill="#aaa"/><rect x="16" y="4.8" width="24" height="0.9" fill="#aaa"/><path d="M4,5 q3,-2 5,0" stroke="#d9a92e" stroke-width="0.6" fill="none"/><path d="M47,5 q3,-2 5,0" stroke="#d9a92e" stroke-width="0.6" fill="none"/><rect x="7" y="11" width="46" height="9" fill="#d8d8d8"/><rect x="7" y="11.9" width="46" height="0.5" fill="#555"/><rect x="7" y="13.5" width="46" height="0.5" fill="#555"/><rect x="7" y="15.1" width="46" height="0.5" fill="#555"/><rect x="7" y="16.7" width="46" height="0.5" fill="#555"/><rect x="7" y="18.3" width="46" height="0.5" fill="#555"/><rect x="11" y="12" width="1.6" height="5" fill="#f2c132"/><rect x="40" y="11.5" width="3" height="1" fill="#fff"/><path d="M10,24 l30,-2" stroke="#222" stroke-width="0.5"/></svg>
<div class="tn" style="top:632.8px">13</div>
<svg class="a" style="left:20px;top:632.6px" width="56" height="31" viewBox="0 0 56 31" font-family="Liberation Sans, sans-serif"><rect width="56" height="31" rx="2.5" fill="#0d0d0d"/><rect x="13" y="3" width="30" height="0.9" fill="#bbb"/><rect x="14" y="4.8" width="28" height="0.9" fill="#bbb"/><path d="M4,5 q3,-2 5,0" stroke="#d9a92e" stroke-width="0.6" fill="none"/><path d="M47,5 q3,-2 5,0" stroke="#d9a92e" stroke-width="0.6" fill="none"/><rect x="7" y="10.5" width="46" height="10" fill="#d8d8d8"/><rect x="7" y="11.5" width="46" height="0.5" fill="#666"/><rect x="7" y="13.2" width="46" height="0.5" fill="#666"/><rect x="7" y="14.9" width="46" height="0.5" fill="#666"/><rect x="7" y="16.6" width="46" height="0.5" fill="#666"/><rect x="7" y="18.3" width="46" height="0.5" fill="#666"/><rect x="7" y="20.0" width="46" height="0.5" fill="#666"/><rect x="31.5" y="9" width="1.5" height="12" fill="#f2c132"/></svg>
<svg class="a" style="left:23px;top:596px" width="9" height="13" viewBox="0 0 9 13"><path d="M1,1 v10 l2.5,-2.2 1.8,3.8 1.6,-0.8 -1.8,-3.6 h3.3z" fill="#111" stroke="#fff" stroke-width="0.8"/></svg>
<!-- rulers -->
<div class="a" style="left:101px;top:101px;width:880px;height:11px;background:#fcfcfc;border-bottom:1px solid #e4e4e4"></div>
<div class="a" style="left:101px;top:101px;width:10px;height:10px;background:#f4f4f4;border:1px solid #e6e6e6"></div>
<div class="a" style="left:101px;top:112px;width:10px;height:415px;background:#fafafa;border-right:1px solid #ececec"></div>
<svg class="a" style="left:0;top:0" width="1200" height="675" viewBox="0 0 1200 675" style="pointer-events:none">
<g stroke="#a8a8a8" stroke-width="0.8">
<line x1="208.3" y1="108" x2="208.3" y2="110.5"/>
<line x1="214.7" y1="105" x2="214.7" y2="110.5"/>
<line x1="221.1" y1="108" x2="221.1" y2="110.5"/>
<line x1="227.5" y1="108" x2="227.5" y2="110.5"/>
<line x1="233.9" y1="108" x2="233.9" y2="110.5"/>
<line x1="246.7" y1="108" x2="246.7" y2="110.5"/>
<line x1="253.1" y1="108" x2="253.1" y2="110.5"/>
<line x1="259.5" y1="108" x2="259.5" y2="110.5"/>
<line x1="265.9" y1="105" x2="265.9" y2="110.5"/>
<line x1="272.3" y1="108" x2="272.3" y2="110.5"/>
<line x1="278.7" y1="108" x2="278.7" y2="110.5"/>
<line x1="285.1" y1="108" x2="285.1" y2="110.5"/>
<line x1="297.9" y1="108" x2="297.9" y2="110.5"/>
<line x1="304.3" y1="108" x2="304.3" y2="110.5"/>
<line x1="310.7" y1="108" x2="310.7" y2="110.5"/>
<line x1="317.1" y1="105" x2="317.1" y2="110.5"/>
<line x1="323.5" y1="108" x2="323.5" y2="110.5"/>
<line x1="329.9" y1="108" x2="329.9" y2="110.5"/>
<line x1="336.3" y1="108" x2="336.3" y2="110.5"/>
<line x1="349.1" y1="108" x2="349.1" y2="110.5"/>
<line x1="355.5" y1="108" x2="355.5" y2="110.5"/>
<line x1="361.9" y1="108" x2="361.9" y2="110.5"/>
<line x1="368.3" y1="105" x2="368.3" y2="110.5"/>
<line x1="374.7" y1="108" x2="374.7" y2="110.5"/>
<line x1="381.1" y1="108" x2="381.1" y2="110.5"/>
<line x1="387.5" y1="108" x2="387.5" y2="110.5"/>
<line x1="400.3" y1="108" x2="400.3" y2="110.5"/>
<line x1="406.7" y1="108" x2="406.7" y2="110.5"/>
<line x1="413.1" y1="108" x2="413.1" y2="110.5"/>
<line x1="419.5" y1="105" x2="419.5" y2="110.5"/>
<line x1="425.9" y1="108" x2="425.9" y2="110.5"/>
<line x1="432.3" y1="108" x2="432.3" y2="110.5"/>
<line x1="438.7" y1="108" x2="438.7" y2="110.5"/>
<line x1="451.5" y1="108" x2="451.5" y2="110.5"/>
<line x1="457.9" y1="108" x2="457.9" y2="110.5"/>
<line x1="464.3" y1="108" x2="464.3" y2="110.5"/>
<line x1="470.7" y1="105" x2="470.7" y2="110.5"/>
<line x1="477.1" y1="108" x2="477.1" y2="110.5"/>
<line x1="483.5" y1="108" x2="483.5" y2="110.5"/>
<line x1="489.9" y1="108" x2="489.9" y2="110.5"/>
<line x1="502.7" y1="108" x2="502.7" y2="110.5"/>
<line x1="509.1" y1="108" x2="509.1" y2="110.5"/>
<line x1="515.5" y1="108" x2="515.5" y2="110.5"/>
<line x1="521.9" y1="105" x2="521.9" y2="110.5"/>
<line x1="528.3" y1="108" x2="528.3" y2="110.5"/>
<line x1="534.7" y1="108" x2="534.7" y2="110.5"/>
<line x1="541.1" y1="108" x2="541.1" y2="110.5"/>
<line x1="553.9" y1="108" x2="553.9" y2="110.5"/>
<line x1="560.3" y1="108" x2="560.3" y2="110.5"/>
<line x1="566.7" y1="108" x2="566.7" y2="110.5"/>
<line x1="573.1" y1="105" x2="573.1" y2="110.5"/>
<line x1="579.5" y1="108" x2="579.5" y2="110.5"/>
<line x1="585.9" y1="108" x2="585.9" y2="110.5"/>
<line x1="592.3" y1="108" x2="592.3" y2="110.5"/>
<line x1="605.1" y1="108" x2="605.1" y2="110.5"/>
<line x1="611.5" y1="108" x2="611.5" y2="110.5"/>
<line x1="617.9" y1="108" x2="617.9" y2="110.5"/>
<line x1="624.3" y1="105" x2="624.3" y2="110.5"/>
<line x1="630.7" y1="108" x2="630.7" y2="110.5"/>
<line x1="637.1" y1="108" x2="637.1" y2="110.5"/>
<line x1="643.5" y1="108" x2="643.5" y2="110.5"/>
<line x1="656.3" y1="108" x2="656.3" y2="110.5"/>
<line x1="662.7" y1="108" x2="662.7" y2="110.5"/>
<line x1="669.1" y1="108" x2="669.1" y2="110.5"/>
<line x1="675.5" y1="105" x2="675.5" y2="110.5"/>
<line x1="681.9" y1="108" x2="681.9" y2="110.5"/>
<line x1="688.3" y1="108" x2="688.3" y2="110.5"/>
<line x1="694.7" y1="108" x2="694.7" y2="110.5"/>
<line x1="707.5" y1="108" x2="707.5" y2="110.5"/>
<line x1="713.9" y1="108" x2="713.9" y2="110.5"/>
<line x1="720.3" y1="108" x2="720.3" y2="110.5"/>
<line x1="726.7" y1="105" x2="726.7" y2="110.5"/>
<line x1="733.1" y1="108" x2="733.1" y2="110.5"/>
<line x1="739.5" y1="108" x2="739.5" y2="110.5"/>
<line x1="745.9" y1="108" x2="745.9" y2="110.5"/>
<line x1="758.7" y1="108" x2="758.7" y2="110.5"/>
<line x1="765.1" y1="108" x2="765.1" y2="110.5"/>
<line x1="771.5" y1="108" x2="771.5" y2="110.5"/>
<line x1="777.9" y1="105" x2="777.9" y2="110.5"/>
<line x1="784.3" y1="108" x2="784.3" y2="110.5"/>
<line x1="790.7" y1="108" x2="790.7" y2="110.5"/>
<line x1="797.1" y1="108" x2="797.1" y2="110.5"/>
<line x1="809.9" y1="108" x2="809.9" y2="110.5"/>
<line x1="816.3" y1="108" x2="816.3" y2="110.5"/>
<line x1="822.7" y1="108" x2="822.7" y2="110.5"/>
<line x1="829.1" y1="105" x2="829.1" y2="110.5"/>
<line x1="835.5" y1="108" x2="835.5" y2="110.5"/>
<line x1="841.9" y1="108" x2="841.9" y2="110.5"/>
<line x1="848.3" y1="108" x2="848.3" y2="110.5"/>
<line x1="861.1" y1="108" x2="861.1" y2="110.5"/>
<line x1="867.5" y1="108" x2="867.5" y2="110.5"/>
<line x1="873.9" y1="108" x2="873.9" y2="110.5"/>
<line x1="880.3" y1="105" x2="880.3" y2="110.5"/>
<line x1="886.7" y1="108" x2="886.7" y2="110.5"/>
<line x1="206.8" y1="103" x2="206.8" y2="112" stroke="#999"/><line x1="889" y1="103" x2="889" y2="112" stroke="#999"/>
<line x1="108" y1="135.4" x2="110.8" y2="135.4"/>
<line x1="105" y1="141.8" x2="110.8" y2="141.8"/>
<line x1="108" y1="148.2" x2="110.8" y2="148.2"/>
<line x1="108" y1="154.6" x2="110.8" y2="154.6"/>
<line x1="108" y1="161.0" x2="110.8" y2="161.0"/>
<line x1="108" y1="173.8" x2="110.8" y2="173.8"/>
<line x1="108" y1="180.2" x2="110.8" y2="180.2"/>
<line x1="108" y1="186.6" x2="110.8" y2="186.6"/>
<line x1="105" y1="193.0" x2="110.8" y2="193.0"/>
<line x1="108" y1="199.4" x2="110.8" y2="199.4"/>
<line x1="108" y1="205.8" x2="110.8" y2="205.8"/>
<line x1="108" y1="212.2" x2="110.8" y2="212.2"/>
<line x1="108" y1="225.0" x2="110.8" y2="225.0"/>
<line x1="108" y1="231.4" x2="110.8" y2="231.4"/>
<line x1="108" y1="237.8" x2="110.8" y2="237.8"/>
<line x1="105" y1="244.2" x2="110.8" y2="244.2"/>
<line x1="108" y1="250.6" x2="110.8" y2="250.6"/>
<line x1="108" y1="257.0" x2="110.8" y2="257.0"/>
<line x1="108" y1="263.4" x2="110.8" y2="263.4"/>
<line x1="108" y1="276.2" x2="110.8" y2="276.2"/>
<line x1="108" y1="282.6" x2="110.8" y2="282.6"/>
<line x1="108" y1="289.0" x2="110.8" y2="289.0"/>
<line x1="105" y1="295.4" x2="110.8" y2="295.4"/>
<line x1="108" y1="301.8" x2="110.8" y2="301.8"/>
<line x1="108" y1="308.2" x2="110.8" y2="308.2"/>
<line x1="108" y1="314.6" x2="110.8" y2="314.6"/>
<line x1="108" y1="327.4" x2="110.8" y2="327.4"/>
<line x1="108" y1="333.8" x2="110.8" y2="333.8"/>
<line x1="108" y1="340.2" x2="110.8" y2="340.2"/>
<line x1="105" y1="346.6" x2="110.8" y2="346.6"/>
<line x1="108" y1="353.0" x2="110.8" y2="353.0"/>
<line x1="108" y1="359.4" x2="110.8" y2="359.4"/>
<line x1="108" y1="365.8" x2="110.8" y2="365.8"/>
<line x1="108" y1="378.6" x2="110.8" y2="378.6"/>
<line x1="108" y1="385.0" x2="110.8" y2="385.0"/>
<line x1="108" y1="391.4" x2="110.8" y2="391.4"/>
<line x1="105" y1="397.8" x2="110.8" y2="397.8"/>
<line x1="108" y1="404.2" x2="110.8" y2="404.2"/>
<line x1="108" y1="410.6" x2="110.8" y2="410.6"/>
<line x1="108" y1="417.0" x2="110.8" y2="417.0"/>
<line x1="108" y1="429.8" x2="110.8" y2="429.8"/>
<line x1="108" y1="436.2" x2="110.8" y2="436.2"/>
<line x1="108" y1="442.6" x2="110.8" y2="442.6"/>
<line x1="105" y1="449.0" x2="110.8" y2="449.0"/>
<line x1="108" y1="455.4" x2="110.8" y2="455.4"/>
<line x1="108" y1="461.8" x2="110.8" y2="461.8"/>
<line x1="108" y1="468.2" x2="110.8" y2="468.2"/>
<line x1="108" y1="481.0" x2="110.8" y2="481.0"/>
<line x1="108" y1="487.4" x2="110.8" y2="487.4"/>
<line x1="108" y1="493.8" x2="110.8" y2="493.8"/>
<line x1="105" y1="500.2" x2="110.8" y2="500.2"/>
<line x1="108" y1="506.6" x2="110.8" y2="506.6"/>
<line x1="108" y1="513.0" x2="110.8" y2="513.0"/>
<line x1="103" y1="129.8" x2="112" y2="129.8" stroke="#999"/><line x1="103" y1="515" x2="112" y2="515" stroke="#999"/>
</g><g font-family="Liberation Sans, sans-serif" font-size="6.5" fill="#808080" text-anchor="middle">
<text x="240.3" y="108.2">6</text>
<text x="291.5" y="108.2">5</text>
<text x="342.7" y="108.2">4</text>
<text x="393.9" y="108.2">3</text>
<text x="445.1" y="108.2">2</text>
<text x="496.3" y="108.2">1</text>
<text x="547.5" y="108.2">0</text>
<text x="598.7" y="108.2">1</text>
<text x="649.9" y="108.2">2</text>
<text x="701.1" y="108.2">3</text>
<text x="752.3" y="108.2">4</text>
<text x="803.5" y="108.2">5</text>
<text x="854.7" y="108.2">6</text>
<text transform="translate(108,167.4) rotate(-90)" y="0">3</text>
<text transform="translate(108,218.6) rotate(-90)" y="0">2</text>
<text transform="translate(108,269.8) rotate(-90)" y="0">1</text>
<text transform="translate(108,321.0) rotate(-90)" y="0">0</text>
<text transform="translate(108,372.2) rotate(-90)" y="0">1</text>
<text transform="translate(108,423.4) rotate(-90)" y="0">2</text>
<text transform="translate(108,474.6) rotate(-90)" y="0">3</text>
</g></svg>
<div class="a" style="left:111px;top:112px;width:870px;height:415px;background:#f1f1f1"></div><div class="a" style="left:116px;top:116.5px;width:865px;height:410.5px;background:#e9e9e9"></div>

<div class="a" style="left:207px;top:131px;width:684px;height:384px;background:rgba(0,0,0,0.06);filter:blur(1.5px)"></div>
<div id="slide" class="a" style="left:207px;top:130px;width:683px;height:384px;overflow:hidden;background:repeating-linear-gradient(180deg,#030303 0px,#030303 1.0px,#252525 2.4px,#252525 3.9px,#030303 5.3px,#030303 5.693px);background-position:0 1.06px">
<svg class="a" style="left:0;top:0" width="683" height="384" viewBox="207 130 683 384">
<defs><filter id="gl" x="-20%" y="-20%" width="140%" height="140%"><feGaussianBlur stdDeviation="0.9"/></filter>
<filter id="bl"><feGaussianBlur stdDeviation="0.35"/></filter></defs>
<g fill="#ffffff" filter="url(#gl)"><circle cx="206.9" cy="130" r="8"/><circle cx="206.9" cy="514" r="8"/><circle cx="233.2" cy="130" r="8"/><circle cx="233.2" cy="514" r="8"/><circle cx="259.5" cy="130" r="8"/><circle cx="259.5" cy="514" r="8"/><circle cx="285.8" cy="130" r="8"/><circle cx="285.8" cy="514" r="8"/><circle cx="312.1" cy="130" r="8"/><circle cx="312.1" cy="514" r="8"/><circle cx="338.4" cy="130" r="8"/><circle cx="338.4" cy="514" r="8"/><circle cx="364.7" cy="130" r="8"/><circle cx="364.7" cy="514" r="8"/><circle cx="391.0" cy="130" r="8"/><circle cx="391.0" cy="514" r="8"/><circle cx="417.3" cy="130" r="8"/><circle cx="417.3" cy="514" r="8"/><circle cx="443.6" cy="130" r="8"/><circle cx="443.6" cy="514" r="8"/><circle cx="469.9" cy="130" r="8"/><circle cx="469.9" cy="514" r="8"/><circle cx="496.2" cy="130" r="8"/><circle cx="496.2" cy="514" r="8"/><circle cx="522.5" cy="130" r="8"/><circle cx="522.5" cy="514" r="8"/><circle cx="548.8" cy="130" r="8"/><circle cx="548.8" cy="514" r="8"/><circle cx="575.1" cy="130" r="8"/><circle cx="575.1" cy="514" r="8"/><circle cx="601.4" cy="130" r="8"/><circle cx="601.4" cy="514" r="8"/><circle cx="627.7" cy="130" r="8"/><circle cx="627.7" cy="514" r="8"/><circle cx="654.0" cy="130" r="8"/><circle cx="654.0" cy="514" r="8"/><circle cx="680.3" cy="130" r="8"/><circle cx="680.3" cy="514" r="8"/><circle cx="706.6" cy="130" r="8"/><circle cx="706.6" cy="514" r="8"/><circle cx="732.9" cy="130" r="8"/><circle cx="732.9" cy="514" r="8"/><circle cx="759.2" cy="130" r="8"/><circle cx="759.2" cy="514" r="8"/><circle cx="785.5" cy="130" r="8"/><circle cx="785.5" cy="514" r="8"/><circle cx="811.8" cy="130" r="8"/><circle cx="811.8" cy="514" r="8"/><circle cx="838.1" cy="130" r="8"/><circle cx="838.1" cy="514" r="8"/><circle cx="864.4" cy="130" r="8"/><circle cx="864.4" cy="514" r="8"/><circle cx="890.7" cy="130" r="8"/><circle cx="890.7" cy="514" r="8"/></g>
<rect x="257" y="236" width="584" height="242" fill="#000"/>
<g font-family="Liberation Sans, sans-serif" filter="url(#bl)">
<line x1="297.4" y1="263.6" x2="832" y2="263.6" stroke="#a6a6a6" stroke-width="1"/>
<line x1="297.4" y1="274.4" x2="832" y2="274.4" stroke="#a6a6a6" stroke-width="1"/>
<line x1="297.4" y1="285.2" x2="832" y2="285.2" stroke="#a6a6a6" stroke-width="1"/>
<line x1="297.4" y1="296.0" x2="832" y2="296.0" stroke="#a6a6a6" stroke-width="1"/>
<line x1="297.4" y1="306.8" x2="832" y2="306.8" stroke="#a6a6a6" stroke-width="1"/>
<line x1="297.4" y1="317.6" x2="832" y2="317.6" stroke="#a6a6a6" stroke-width="1"/>
<line x1="297.4" y1="328.4" x2="832" y2="328.4" stroke="#a6a6a6" stroke-width="1"/>
<line x1="297.4" y1="339.2" x2="832" y2="339.2" stroke="#a6a6a6" stroke-width="1"/>
<line x1="297.4" y1="350.0" x2="832" y2="350.0" stroke="#a6a6a6" stroke-width="1"/>
<line x1="297.4" y1="360.8" x2="832" y2="360.8" stroke="#a6a6a6" stroke-width="1"/>
<line x1="297.4" y1="371.6" x2="832" y2="371.6" stroke="#a6a6a6" stroke-width="1"/>
<text x="290" y="267.1" text-anchor="end" font-size="8.8" fill="#e6e6e6" stroke="#e6e6e6" stroke-width="0.3">5</text>
<text x="290" y="277.9" text-anchor="end" font-size="8.8" fill="#e6e6e6" stroke="#e6e6e6" stroke-width="0.3">4.5</text>
<text x="290" y="288.7" text-anchor="end" font-size="8.8" fill="#e6e6e6" stroke="#e6e6e6" stroke-width="0.3">4</text>
<text x="290" y="299.5" text-anchor="end" font-size="8.8" fill="#e6e6e6" stroke="#e6e6e6" stroke-width="0.3">3.5</text>
<text x="290" y="310.3" text-anchor="end" font-size="8.8" fill="#e6e6e6" stroke="#e6e6e6" stroke-width="0.3">3</text>
<text x="290" y="321.1" text-anchor="end" font-size="8.8" fill="#e6e6e6" stroke="#e6e6e6" stroke-width="0.3">2.5</text>
<text x="290" y="331.9" text-anchor="end" font-size="8.8" fill="#e6e6e6" stroke="#e6e6e6" stroke-width="0.3">2</text>
<text x="290" y="342.7" text-anchor="end" font-size="8.8" fill="#e6e6e6" stroke="#e6e6e6" stroke-width="0.3">1.5</text>
<text x="290" y="353.5" text-anchor="end" font-size="8.8" fill="#e6e6e6" stroke="#e6e6e6" stroke-width="0.3">1</text>
<text x="290" y="364.3" text-anchor="end" font-size="8.8" fill="#e6e6e6" stroke="#e6e6e6" stroke-width="0.3">0.5</text>
<text x="290" y="375.1" text-anchor="end" font-size="8.8" fill="#e6e6e6" stroke="#e6e6e6" stroke-width="0.3">0</text>
<line x1="297.4" y1="371.6" x2="297.4" y2="374" stroke="#a6a6a6" stroke-width="1"/>
<line x1="321.7" y1="371.6" x2="321.7" y2="374" stroke="#a6a6a6" stroke-width="1"/>
<line x1="346.0" y1="371.6" x2="346.0" y2="374" stroke="#a6a6a6" stroke-width="1"/>
<line x1="370.3" y1="371.6" x2="370.3" y2="374" stroke="#a6a6a6" stroke-width="1"/>
<line x1="394.6" y1="371.6" x2="394.6" y2="374" stroke="#a6a6a6" stroke-width="1"/>
<line x1="418.9" y1="371.6" x2="418.9" y2="374" stroke="#a6a6a6" stroke-width="1"/>
<line x1="443.2" y1="371.6" x2="443.2" y2="374" stroke="#a6a6a6" stroke-width="1"/>
<line x1="467.5" y1="371.6" x2="467.5" y2="374" stroke="#a6a6a6" stroke-width="1"/>
<line x1="491.8" y1="371.6" x2="491.8" y2="374" stroke="#a6a6a6" stroke-width="1"/>
<line x1="516.1" y1="371.6" x2="516.1" y2="374" stroke="#a6a6a6" stroke-width="1"/>
<line x1="540.4" y1="371.6" x2="540.4" y2="374" stroke="#a6a6a6" stroke-width="1"/>
<line x1="564.7" y1="371.6" x2="564.7" y2="374" stroke="#a6a6a6" stroke-width="1"/>
<line x1="589.0" y1="371.6" x2="589.0" y2="374" stroke="#a6a6a6" stroke-width="1"/>
<line x1="613.3" y1="371.6" x2="613.3" y2="374" stroke="#a6a6a6" stroke-width="1"/>
<line x1="637.6" y1="371.6" x2="637.6" y2="374" stroke="#a6a6a6" stroke-width="1"/>
<line x1="661.9" y1="371.6" x2="661.9" y2="374" stroke="#a6a6a6" stroke-width="1"/>
<line x1="686.2" y1="371.6" x2="686.2" y2="374" stroke="#a6a6a6" stroke-width="1"/>
<line x1="710.5" y1="371.6" x2="710.5" y2="374" stroke="#a6a6a6" stroke-width="1"/>
<line x1="734.8" y1="371.6" x2="734.8" y2="374" stroke="#a6a6a6" stroke-width="1"/>
<line x1="759.1" y1="371.6" x2="759.1" y2="374" stroke="#a6a6a6" stroke-width="1"/>
<line x1="783.4" y1="371.6" x2="783.4" y2="374" stroke="#a6a6a6" stroke-width="1"/>
<line x1="807.7" y1="371.6" x2="807.7" y2="374" stroke="#a6a6a6" stroke-width="1"/>
<line x1="832.0" y1="371.6" x2="832.0" y2="374" stroke="#a6a6a6" stroke-width="1"/>
<line x1="297.4" y1="371.6" x2="832" y2="371.6" stroke="#c8c8c8" stroke-width="1.2"/>
<rect x="298.8" y="286.7" width="21.8" height="3.9" fill="#808080"/>
<rect x="323.1" y="291.8" width="21.8" height="1.6" fill="#8d6e20"/>
<rect x="347.4" y="293.0" width="21.8" height="78.6" fill="#8d6e20"/>
<rect x="371.7" y="287.8" width="21.8" height="5.2" fill="#808080"/>
<rect x="396.0" y="294.8" width="21.8" height="1.6" fill="#8d6e20"/>
<rect x="420.3" y="295.3" width="21.8" height="1.0" fill="#bbbbbb"/>
<rect x="444.6" y="294.6" width="21.8" height="1.4" fill="#f5f5f5"/>
<rect x="468.9" y="296.2" width="21.8" height="2.8" fill="#8d6e20"/>
<rect x="493.2" y="296.6" width="21.8" height="0.8" fill="#999"/>
<rect x="517.5" y="296.6" width="21.8" height="1.4" fill="#cccccc"/>
<rect x="541.8" y="298.4" width="21.8" height="0.8" fill="#999"/>
<rect x="566.1" y="299.4" width="21.8" height="1.4" fill="#8d6e20"/>
<rect x="590.4" y="300.0" width="21.8" height="1.6" fill="#8d6e20"/>
<rect x="614.7" y="298.4" width="21.8" height="1.5" fill="#f5f5f5"/>
<rect x="639.0" y="298.7" width="21.8" height="2.5" fill="#808080"/>
<rect x="663.3" y="302.6" width="21.8" height="1.6" fill="#8d6e20"/>
<rect x="687.6" y="263.8" width="21.8" height="41.7" fill="#ffffff"/>
<rect x="711.9" y="298.0" width="21.8" height="8.2" fill="#808080"/>
<rect x="736.2" y="308.6" width="21.8" height="2.4" fill="#8d6e20"/>
<rect x="760.5" y="303.8" width="21.8" height="6.7" fill="#808080"/>
<rect x="784.8" y="312.2" width="21.8" height="1.0" fill="#bbbbbb"/>
<rect x="809.1" y="316.0" width="21.8" height="1.6" fill="#8d6e20"/>
<text x="309.5" y="290.6" text-anchor="middle" font-size="5.5" fill="#d9a82a">-0.17</text>
<text x="333.8" y="294.6" text-anchor="middle" font-size="5.5" fill="#ffffff">+0.09</text>
<text x="358.1" y="334.5" text-anchor="middle" font-size="5.5" fill="#ffffff">+3.65</text>
<text x="382.4" y="292.4" text-anchor="middle" font-size="5.5" fill="#d9a82a">-0.28</text>
<text x="406.7" y="297.6" text-anchor="middle" font-size="5.5" fill="#ffffff">+0.12</text>
<text x="431.0" y="297.8" text-anchor="middle" font-size="5.5" fill="#ffffff">+0.02</text>
<text x="455.3" y="297.3" text-anchor="middle" font-size="5.5" fill="#d9a82a">-0.06</text>
<text x="479.6" y="299.6" text-anchor="middle" font-size="5.5" fill="#ffffff">+0.14</text>
<text x="503.9" y="299.0" text-anchor="middle" font-size="5.5" fill="#ffffff">+0.01</text>
<text x="528.2" y="299.3" text-anchor="middle" font-size="5.5" fill="#d9a82a">-0.04</text>
<text x="552.5" y="300.8" text-anchor="middle" font-size="5.5" fill="#ffffff">+0.01</text>
<text x="576.9" y="302.1" text-anchor="middle" font-size="5.5" fill="#ffffff">+0.06</text>
<text x="601.1" y="302.8" text-anchor="middle" font-size="5.5" fill="#ffffff">+0.08</text>
<text x="625.4" y="301.1" text-anchor="middle" font-size="5.5" fill="#d9a82a">-0.07</text>
<text x="649.7" y="301.9" text-anchor="middle" font-size="5.5" fill="#d9a82a">-0.10</text>
<text x="674.0" y="305.4" text-anchor="middle" font-size="5.5" fill="#ffffff">+0.09</text>
<text x="698.9" y="288" text-anchor="middle" font-size="9" font-weight="bold" fill="#e8b52e" stroke="#e8b52e" stroke-width="0.3">-1.93</text>
<text x="722.6" y="304.1" text-anchor="middle" font-size="5.5" fill="#d9a82a">-0.36</text>
<text x="746.9" y="311.8" text-anchor="middle" font-size="5.5" fill="#ffffff">+0.14</text>
<text x="771.2" y="309.1" text-anchor="middle" font-size="5.5" fill="#d9a82a">-0.32</text>
<text x="795.5" y="314.7" text-anchor="middle" font-size="5.5" fill="#d9a82a">-0.02</text>
<text x="819.9" y="318.8" text-anchor="middle" font-size="5.5" fill="#ffffff">+0.08</text>
<text transform="translate(312.0,382) rotate(-45)" text-anchor="end" font-size="8.45" fill="#d4d4d4">pistachio</text>
<text transform="translate(336.3,382) rotate(-45)" text-anchor="end" font-size="8.45" fill="#d4d4d4">salted caramel</text>
<text transform="translate(360.6,382) rotate(-45)" text-anchor="end" font-size="8.45" fill="#d4d4d4">cannoli</text>
<text transform="translate(384.9,382) rotate(-45)" text-anchor="end" font-size="8.45" fill="#d4d4d4">butter pecan</text>
<text transform="translate(409.2,382) rotate(-45)" text-anchor="end" font-size="8.45" fill="#d4d4d4">rocky road</text>
<text transform="translate(433.5,382) rotate(-45)" text-anchor="end" font-size="8.45" fill="#d4d4d4">key lime pie</text>
<text transform="translate(457.8,382) rotate(-45)" text-anchor="end" font-size="8.45" fill="#d4d4d4">rum raisin</text>
<text transform="translate(482.1,382) rotate(-45)" text-anchor="end" font-size="8.45" fill="#d4d4d4">cherry vanilla</text>
<text transform="translate(506.4,382) rotate(-45)" text-anchor="end" font-size="8.45" fill="#d4d4d4">brownie batter</text>
<text transform="translate(530.8,382) rotate(-45)" text-anchor="end" font-size="8.45" fill="#d4d4d4">salted caramel chocolate trio</text>
<text transform="translate(555.0,382) rotate(-45)" text-anchor="end" font-size="8.45" fill="#d4d4d4">mint chip</text>
<text transform="translate(579.4,382) rotate(-45)" text-anchor="end" font-size="8.45" fill="#d4d4d4">chocolate fudge brownie</text>
<text transform="translate(603.6,382) rotate(-45)" text-anchor="end" font-size="8.45" fill="#d4d4d4">coffee &amp; chocolate</text>
<text transform="translate(627.9,382) rotate(-45)" text-anchor="end" font-size="8.45" fill="#d4d4d4">toffee &amp; waffle cone</text>
<text transform="translate(652.2,382) rotate(-45)" text-anchor="end" font-size="8.45" fill="#d4d4d4">peanut butter cup chip</text>
<text transform="translate(676.5,382) rotate(-45)" text-anchor="end" font-size="8.45" fill="#d4d4d4">vanilla peanut butter cookie dough</text>
<text transform="translate(700.9,382) rotate(-45)" text-anchor="end" font-size="8.45" fill="#d4d4d4">coffee chip</text>
<text transform="translate(725.1,382) rotate(-45)" text-anchor="end" font-size="8.45" fill="#d4d4d4">vanilla</text>
<text transform="translate(749.4,382) rotate(-45)" text-anchor="end" font-size="8.45" fill="#d4d4d4">coffee toffee bar crunch</text>
<text transform="translate(773.7,382) rotate(-45)" text-anchor="end" font-size="8.45" fill="#d4d4d4">low calorie peanut butter</text>
<text transform="translate(798.0,382) rotate(-45)" text-anchor="end" font-size="8.45" fill="#d4d4d4">chocolate chip cookie dough</text>
<text transform="translate(822.4,382) rotate(-45)" text-anchor="end" font-size="8.45" fill="#d4d4d4">vanilla milk chocolate almond bar</text>
<text transform="translate(274.5,318) rotate(-90)" text-anchor="middle" font-size="7.8" font-weight="bold" fill="#f0f0f0" stroke="#f0f0f0" stroke-width="0.2">average rating</text>
<rect x="512.5" y="245.3" width="4.5" height="4.5" fill="#8d6e20"/><text x="521" y="250.2" font-size="8.3" fill="#e6e6e6">increase</text>
<rect x="560.5" y="245.3" width="4.5" height="4.5" fill="#8a8a8a"/><text x="569" y="250.2" font-size="8.3" fill="#e6e6e6">decrease</text>
</g>
<g fill="none" stroke="#e9b935" stroke-width="31" stroke-linecap="round" transform="translate(224,164) scale(0.06667)">
<path d="M620,125 C480,130 400,260 470,360 C530,440 680,430 800,370 C900,320 990,340 1000,410"/>
<path d="M70,440 C150,500 330,520 470,430 C600,330 700,220 900,200 C1080,190 1150,300 1120,400 C1090,500 960,560 820,525"/>
<path d="M240,430 C360,420 450,360 560,270 C680,170 780,130 880,125 C960,120 1020,140 1040,160"/>
</g>
<g fill="none" stroke="#e9b935" stroke-width="31" stroke-linecap="round" transform="translate(873,164) scale(-0.06667,0.06667)">
<path d="M620,125 C480,130 400,260 470,360 C530,440 680,430 800,370 C900,320 990,340 1000,410"/>
<path d="M70,440 C150,500 330,520 470,430 C600,330 700,220 900,200 C1080,190 1150,300 1120,400 C1090,500 960,560 820,525"/>
<path d="M240,430 C360,420 450,360 560,270 C680,170 780,130 880,125 C960,120 1020,140 1040,160"/>
</g>
<text x="548" y="180" text-anchor="middle" font-family="Liberation Serif, serif" font-weight="bold" font-size="27" fill="#fff" stroke="#fff" stroke-width="0.6" textLength="341" lengthAdjust="spacingAndGlyphs">Coffee chip had the greatest</text>
<text x="548" y="207" text-anchor="middle" font-family="Liberation Serif, serif" font-weight="bold" font-size="27" fill="#fff" stroke="#fff" stroke-width="0.6" textLength="316" lengthAdjust="spacingAndGlyphs">decrease in average rating</text>
<text x="867" y="499" text-anchor="end" font-family="Liberation Sans, sans-serif" font-size="8.5" fill="#fff" stroke="#fff" stroke-width="0.45" textLength="127" lengthAdjust="spacingAndGlyphs">*101 values have been filtered out.</text>
</svg>
</div>

<!-- notes -->
<div class="a" style="left:100px;top:527px;width:881px;height:130px;background:#ebebeb;border-top:1px solid #d9d9d9"></div>
<span class="t" id="note" style="left:106px;top:536px;font-size:14.86px;letter-spacing:0.066px;color:#222;-webkit-text-stroke:0.35px #222">coffee chip had the greatest decrease in average rating, down 39% compared to the previous period.</span>
<!-- right pane -->
<div class="a" style="left:980px;top:101px;width:1px;height:556px;background:#dcdcdc"></div>
<div class="a" style="left:981px;top:101px;width:219px;height:556px;background:#f1f1f1"></div>
<div class="a" style="left:981px;top:101px;width:219px;height:17px;background:#ebebeb"></div>
<span class="t" style="left:991px;top:105px;font-size:9.06px;color:#2a2a2a;font-weight:bold">Project Slide Wow</span>
<svg class="a" style="left:1181px;top:105px" width="10" height="10" viewBox="0 0 10 10"><circle cx="5" cy="5" r="4.3" fill="#808080"/><path d="M3.3,3.3 l3.4,3.4 M6.7,3.3 l-3.4,3.4" stroke="#f1f1f1" stroke-width="1"/></svg>
<div class="a" style="left:1062.5px;top:181.3px;width:55px;height:54.5px;border-radius:9px;background:#f70a0a"></div>
<svg class="a" style="left:1062.5px;top:181.3px" width="55" height="55" viewBox="0 0 55 55"><path fill-rule="evenodd" d="M24.3,11.5 H31.5 L43.5,41.4 H11.3 Z M27.7,23.6 L34,41.4 H31.7 L30.5,33.7 H23.3 Z" fill="#fff"/></svg>
<span class="t" id="psw" style="left:1003px;top:259px;font-size:21.6px;color:#4e4e4e;-webkit-text-stroke:0.55px #f1f1f1">Project Slide Wow</span>
<div class="a" style="left:981px;top:317.5px;width:210px;height:330px;background:#f8071a"></div>
<div class="a" style="left:1193px;top:320px;width:5px;height:318px;border-radius:3px;background:#c4c4c4"></div>
<div class="bub bw" style="top:330px;height:42px;padding-top:9.2px">What is the best flavor of ice cream?<br>Compare to strawberry</div>
<div class="bub bg" style="top:385.5px;height:29px;padding-top:8.2px">Slides have been generated.</div>
<div class="bub bw" style="top:427px;height:42px;padding-top:9.2px">How has the datachanged compard<br>to the previouys year?</div>
<div class="bub bg" style="top:482.5px;height:29px;padding-top:8.2px">Generating...</div>
<div class="bub bg" style="top:524px;height:29px;padding-top:8.2px">New slides have been added.</div>
<div class="a" style="left:981px;top:565px;width:210px;height:1px;background:#b80a14"></div>
<div class="a" style="left:988px;top:579px;width:196px;height:47px;border-radius:7px;background:#fff;border:1.5px solid #d8d8d8"></div>
<div class="a" style="left:1153px;top:632.5px;width:25px;height:12px;border-radius:3px;background:#fff"></div>
<span class="t" style="left:1157.5px;top:636px;font-size:6.5px;color:#333">Send</span>
<div class="a" style="left:981px;top:647px;width:219px;height:10px;background:#f4f4f4"></div>
<!-- status bar -->
<div class="a" style="left:0;top:657px;width:1200px;height:18px;background:#f1f1f1;border-top:1px solid #dedede;border-radius:0 0 7px 7px"></div>
<span class="st" style="left:15px">Slide 12 of 14</span>
<span class="st" style="left:75px">English (United States)</span>
<svg class="a" style="left:169px;top:659px" width="11" height="13" viewBox="0 0 11 13" fill="none" stroke="#666" stroke-width="0.9"><circle cx="3" cy="2.5" r="1.5"/><circle cx="8" cy="2.5" r="1.5"/><path d="M3,4 v3 l2,2 M8,4 v3"/><circle cx="7" cy="9.5" r="2.6" fill="#555" stroke="none"/><path d="M7,8.3 v1.6" stroke="#fff"/></svg>
<span class="st" style="left:182px">Accessibility: Investigate</span>
<svg class="a" style="left:851px;top:659px" width="14" height="13" viewBox="0 0 14 13" fill="none" stroke="#666" stroke-width="0.9"><path d="M2,2 h9 v6 l-3,3 h-6z M11,8 h-3 v3"/></svg>
<span class="st" style="left:866px">Notes</span>
<svg class="a" style="left:897px;top:659px" width="14" height="13" viewBox="0 0 14 13" fill="none" stroke="#666" stroke-width="0.9"><path d="M2,2 h10 v7 h-6 l-3,2.5 v-2.5 h-1z"/></svg>
<span class="st" style="left:912px">Comments</span>
<div class="a" style="left:957px;top:659px;width:20px;height:14px;border-radius:3px;background:#cfcfcf"></div>
<svg class="a" style="left:955px;top:659px" width="240" height="14" viewBox="955 659 240 14" fill="none" stroke="#666" stroke-width="0.9">
 <rect x="962.5" y="661.5" width="11" height="9" rx="1"/><rect x="962.5" y="661.5" width="4" height="9" fill="#666"/>
 <rect x="984.5" y="661.5" width="4.5" height="4" rx="0.8"/><rect x="991.5" y="661.5" width="4.5" height="4" rx="0.8"/><rect x="984.5" y="667.5" width="4.5" height="4" rx="0.8"/><rect x="991.5" y="667.5" width="4.5" height="4" rx="0.8"/>
 <rect x="1007.5" y="661.5" width="11" height="9" rx="1"/><path d="M1013,661.5 v9"/>
 <rect x="1031.5" y="661.5" width="11" height="7" rx="0.8"/><path d="M1037,668.5 v3 M1034.5,671.5 h5"/>
 <path d="M1051,666.5 h4"/>
 <path d="M1060,666.5 h62" stroke="#bdbdbd" stroke-width="1.5"/>
 <path d="M1126,666.5 h6 M1129,663.5 v6"/>
 <path d="M1177,663 l2.5,2.5 M1177,663 h2 M1177,663 v2 M1186,663 l-2.5,2.5 M1186,663 h-2 M1186,663 v2 M1177,671 l2.5,-2.5 M1177,671 h2 M1177,671 v-2 M1186,671 l-2.5,-2.5 M1186,671 h-2 M1186,671 v-2"/>
</svg>
<div class="a" style="left:1087px;top:661px;width:11px;height:11px;border-radius:50%;background:#fff;box-shadow:0 0 1.5px rgba(0,0,0,0.35)"></div>
<span class="st" style="left:1143px">114%</span>
</body></html>
